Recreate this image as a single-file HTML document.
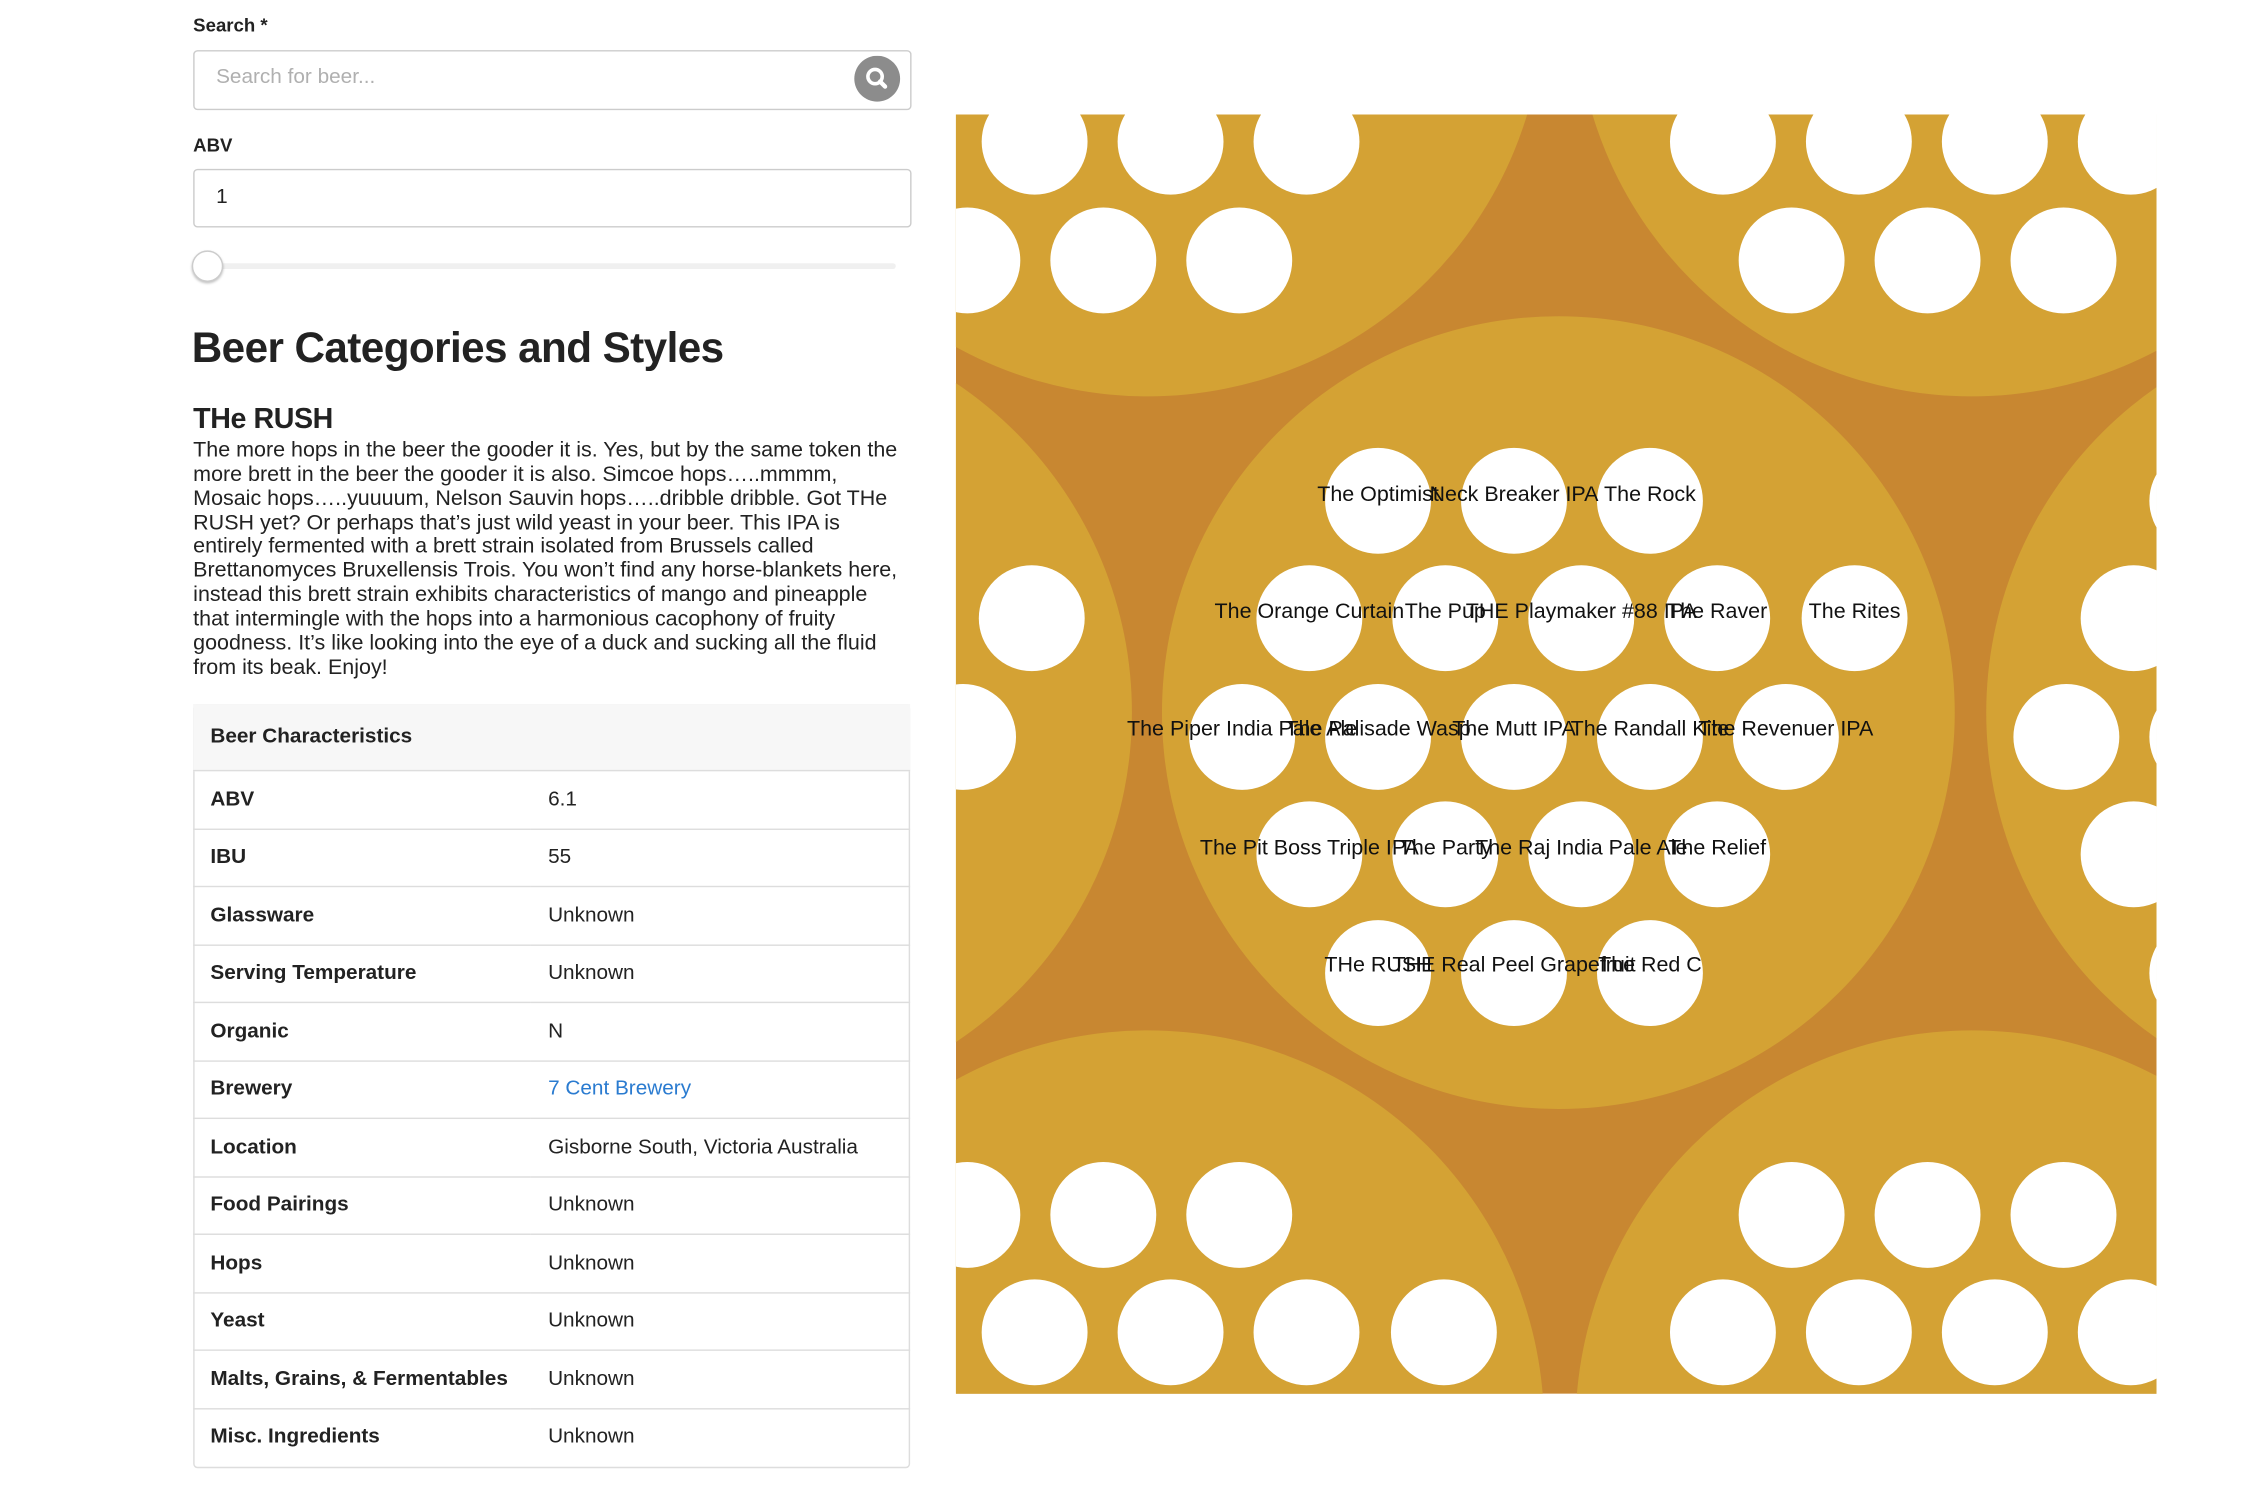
<!DOCTYPE html>
<html><head><meta charset="utf-8"><style>
html,body{margin:0;padding:0;background:#fff;width:2244px;height:1504px;overflow:hidden}
#w{position:absolute;left:0;top:0;width:1552px;height:1040px;transform:scale(1.431);transform-origin:0 0;font-family:"Liberation Sans",sans-serif;color:#222;overflow:hidden}
.a{position:absolute;white-space:nowrap}
.lbl{font-size:13px;font-weight:bold;line-height:16px}
.inp{position:absolute;left:135px;width:500px;border:1px solid #ccc;border-radius:3px;background:#fff}
p.t{position:absolute;left:135px;top:307px;margin:0;font-size:15px;line-height:16.85px;letter-spacing:0;white-space:nowrap}
table{position:absolute;left:135px;top:492px;width:501px;border-collapse:collapse;font-size:14.5px}
td{border-top:1px solid #ddd;height:39.5px;padding:0 0 0 12px;white-space:nowrap}
.tb{position:absolute;left:135px;top:492px;width:499px;height:532px;border:1px solid #ddd;border-radius:3px}
td.k{font-weight:bold;width:224px}
</style></head><body><div id="w">
<div class="a lbl" style="left:135px;top:10px">Search *</div>
<div class="inp" style="top:35px;height:40px"></div>
<div class="a" style="left:151px;top:46px;font-size:14.5px;color:#b0b0b0">Search for beer...</div>
<svg class="a" style="left:596px;top:39px" width="34" height="34"><circle cx="17" cy="16" r="16" fill="#8c8c8c"/><circle cx="15.5" cy="14.5" r="5" fill="none" stroke="#fff" stroke-width="2.5"/><line x1="19" y1="18" x2="22.5" y2="21.5" stroke="#fff" stroke-width="3" stroke-linecap="round"/></svg>
<div class="a lbl" style="left:135px;top:94px">ABV</div>
<div class="inp" style="top:118px;height:39px"></div>
<div class="a" style="left:151px;top:130px;font-size:14.5px">1</div>
<div class="a" style="left:145px;top:184px;width:481px;height:4px;background:#f0f0f0;border-radius:2px"></div>
<div class="a" style="left:134px;top:175px;width:20px;height:20px;border-radius:50%;background:#fff;border:1px solid #ccc;box-shadow:0 1px 2px rgba(0,0,0,.25)"></div>
<div class="a" style="left:134px;top:225px;font-size:29.5px;font-weight:bold;letter-spacing:-0.4px;line-height:38px">Beer Categories and Styles</div>
<div class="a" style="left:135px;top:280px;font-size:20px;line-height:26px;font-weight:bold;letter-spacing:-0.3px">THe RUSH</div>
<p class="t">The more hops in the beer the gooder it is. Yes, but by the same token the<br>more brett in the beer the gooder it is also. Simcoe hops…..mmmm,<br>Mosaic hops…..yuuuum, Nelson Sauvin hops…..dribble dribble. Got THe<br>RUSH yet? Or perhaps that’s just wild yeast in your beer. This IPA is<br>entirely fermented with a brett strain isolated from Brussels called<br>Brettanomyces Bruxellensis Trois. You won’t find any horse-blankets here,<br>instead this brett strain exhibits characteristics of mango and pineapple<br>that intermingle with the hops into a harmonious cacophony of fruity<br>goodness. It’s like looking into the eye of a duck and sucking all the fluid<br>from its beak. Enjoy!</p>
<div class="tb"></div>
<table>
<tr><td colspan="2" style="background:#f7f7f7;height:46px;border-top:none;font-weight:bold">Beer Characteristics</td></tr>
<tr><td class="k">ABV</td><td>6.1</td></tr>
<tr><td class="k">IBU</td><td>55</td></tr>
<tr><td class="k">Glassware</td><td>Unknown</td></tr>
<tr><td class="k">Serving Temperature</td><td>Unknown</td></tr>
<tr><td class="k">Organic</td><td>N</td></tr>
<tr><td class="k">Brewery</td><td style="color:#2a7bd0">7 Cent Brewery</td></tr>
<tr><td class="k">Location</td><td>Gisborne South, Victoria Australia</td></tr>
<tr><td class="k">Food Pairings</td><td>Unknown</td></tr>
<tr><td class="k">Hops</td><td>Unknown</td></tr>
<tr><td class="k">Yeast</td><td>Unknown</td></tr>
<tr><td class="k">Malts, Grains, &amp; Fermentables</td><td>Unknown</td></tr>
<tr><td class="k">Misc. Ingredients</td><td>Unknown</td></tr>
</table>
<svg class="a" style="left:668px;top:80px" width="839" height="894" viewBox="668 80 839 894">
<defs><g id="p" fill="#fff">
<circle cx="-126" cy="-148" r="37"/><circle cx="-31" cy="-148" r="37"/><circle cx="64" cy="-148" r="37"/>
<circle cx="-174" cy="-66" r="37"/><circle cx="-79" cy="-66" r="37"/><circle cx="16" cy="-66" r="37"/><circle cx="111" cy="-66" r="37"/><circle cx="207" cy="-66" r="37"/>
<circle cx="-221" cy="17" r="37"/><circle cx="-126" cy="17" r="37"/><circle cx="-31" cy="17" r="37"/><circle cx="64" cy="17" r="37"/><circle cx="159" cy="17" r="37"/>
<circle cx="-174" cy="99" r="37"/><circle cx="-79" cy="99" r="37"/><circle cx="16" cy="99" r="37"/><circle cx="111" cy="99" r="37"/>
<circle cx="-126" cy="182" r="37"/><circle cx="-31" cy="182" r="37"/><circle cx="64" cy="182" r="37"/>
</g></defs>
<rect x="668" y="80" width="839" height="894" fill="#c88731"/>
<g fill="#d4a234">
<circle cx="1089" cy="498" r="277"/><circle cx="802" cy="0" r="277"/><circle cx="1378" cy="0" r="277"/><circle cx="802" cy="997" r="277"/><circle cx="1378" cy="997" r="277"/><circle cx="514" cy="498" r="277"/><circle cx="1665" cy="498" r="277"/>
</g>
<use href="#p" x="1089" y="498"/><use href="#p" x="802" y="0"/><use href="#p" x="1378" y="0"/><use href="#p" x="802" y="997"/><use href="#p" x="1378" y="997"/><use href="#p" x="514" y="498"/><use href="#p" x="1665" y="498"/>
<g font-family="Liberation Sans, sans-serif" font-size="15" fill="#111" text-anchor="middle">
<text x="963" y="350">The Optimist</text><text x="1058" y="350">Neck Breaker IPA</text><text x="1153" y="350">The Rock</text>
<text x="915" y="432">The Orange Curtain</text><text x="1010" y="432">The Pup</text><text x="1105" y="432">THE Playmaker #88 IPA</text><text x="1200" y="432">The Raver</text><text x="1296" y="432">The Rites</text>
<text x="868" y="514">The Piper India Pale Ale</text><text x="963" y="514">The Palisade Wasp</text><text x="1058" y="514">The Mutt IPA</text><text x="1153" y="514">The Randall Kite</text><text x="1248" y="514">The Revenuer IPA</text>
<text x="915" y="597">The Pit Boss Triple IPA</text><text x="1010" y="597">The Party</text><text x="1105" y="597">The Raj India Pale Ale</text><text x="1200" y="597">The Relief</text>
<text x="963" y="679">THe RUSH</text><text x="1058" y="679">THE Real Peel Grapefruit</text><text x="1153" y="679">The Red C</text>
</g>
</svg>
</div></body></html>
